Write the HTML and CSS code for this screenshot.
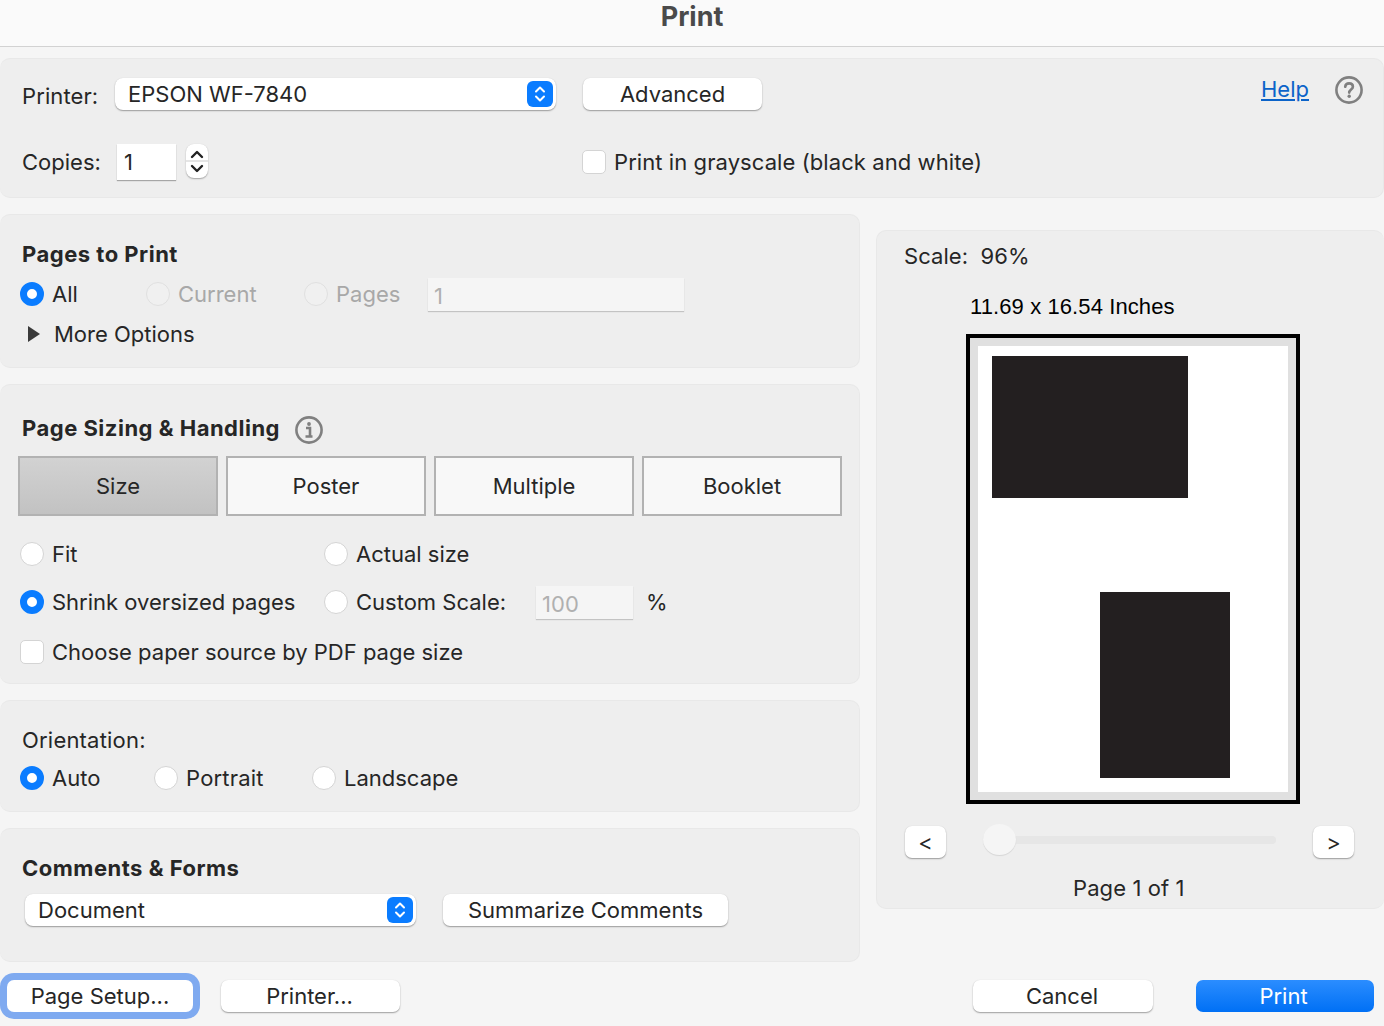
FILE: index.html
```html
<!DOCTYPE html>
<html lang="en">
<head>
<meta charset="utf-8">
<title>Print</title>
<link rel="stylesheet" href="styles.css">
</head>
<body>
<header class="titlebar">Print</header>

<section class="panel top-panel">
  <div class="row printer-row">
    <span class="label printer-label">Printer:</span>
    <div class="select printer-select"><span>EPSON WF-7840</span>
      <svg class="updown" viewBox="0 0 26 26"><rect width="26" height="26" rx="6" fill="#0a7cff"/><path d="M9 10.5 13 6.5 17 10.5M9 15.5 13 19.5 17 15.5" fill="none" stroke="#fff" stroke-width="2" stroke-linecap="round" stroke-linejoin="round"/></svg>
    </div>
    <button class="btn advanced">Advanced</button>
    <a class="help-link">Help</a>
    <svg class="help-icon" viewBox="0 0 28 28"><circle cx="14" cy="14" r="12.6" fill="none" stroke="#808080" stroke-width="2.6"/><path d="M10.2 10.8C10.4 8.6 12 7.4 14.1 7.4 16.3 7.4 17.9 8.7 17.9 10.7 17.9 13.4 14.2 13.6 14.2 16.6" fill="none" stroke="#808080" stroke-width="2.6" stroke-linecap="round"/><circle cx="14.2" cy="20.3" r="1.7" fill="#808080"/></svg>
  </div>
  <div class="row copies-row">
    <span class="label copies-label">Copies:</span>
    <div class="field copies-field">1</div>
    <div class="stepper">
      <svg viewBox="0 0 22 34"><path d="M6 13 11 8 16 13M6 22 11 27 16 22" fill="none" stroke="#222" stroke-width="2.4" stroke-linecap="round" stroke-linejoin="round"/><path d="M0 17H22" stroke="#dcdcdc" stroke-width="1.5"/></svg>
    </div>
    <span class="check grayscale-check"></span>
    <span class="label grayscale-label">Print in grayscale (black and white)</span>
  </div>
</section>

<div class="main">
  <div class="left-col">
    <section class="panel pages-panel">
      <h2 class="row heading">Pages to Print</h2>
      <div class="row option-row">
        <span class="radio on"></span><span class="label w-all">All</span>
        <span class="radio off"></span><span class="label muted w-current">Current</span>
        <span class="radio off"></span><span class="label muted w-pages">Pages</span>
        <div class="field disabled pages-field">1</div>
      </div>
      <div class="row more-row">
        <svg class="disclosure" viewBox="0 0 12 16"><path d="M0 0 12 8 0 16Z" fill="#3a3a3a"/></svg>
        <span class="label">More Options</span>
      </div>
    </section>

    <section class="panel sizing-panel">
      <h2 class="row heading">Page Sizing &amp; Handling
        <svg class="info-icon" viewBox="0 0 28 28"><circle cx="14" cy="14" r="12.6" fill="none" stroke="#808080" stroke-width="2.6"/><circle cx="14" cy="8" r="1.9" fill="#808080"/><path d="M11 12H15V20M10.5 20.5H17.5" fill="none" stroke="#808080" stroke-width="2.6"/></svg>
      </h2>
      <div class="tabs">
        <button class="tab active">Size</button>
        <button class="tab">Poster</button>
        <button class="tab">Multiple</button>
        <button class="tab">Booklet</button>
      </div>
      <div class="row fit-row">
        <div class="col-a"><span class="radio"></span><span class="label">Fit</span></div>
        <span class="radio"></span><span class="label">Actual size</span>
      </div>
      <div class="row shrink-row">
        <div class="col-a"><span class="radio on"></span><span class="label">Shrink oversized pages</span></div>
        <span class="radio"></span><span class="label">Custom Scale:</span>
        <div class="field disabled scale-field">100</div>
        <span class="label percent">%</span>
      </div>
      <div class="row source-row">
        <span class="check source-check"></span><span class="label">Choose paper source by PDF page size</span>
      </div>
    </section>

    <section class="panel orientation-panel">
      <div class="row plain-heading"><span class="label wide-label">Orientation:</span></div>
      <div class="row orient-row">
        <span class="radio on"></span><span class="label w-auto">Auto</span>
        <span class="radio"></span><span class="label wide-label w-portrait">Portrait</span>
        <span class="radio"></span><span class="label">Landscape</span>
      </div>
    </section>

    <section class="panel comments-panel">
      <h2 class="row heading">Comments &amp; Forms</h2>
      <div class="row comments-row">
        <div class="select doc-select"><span>Document</span>
          <svg class="updown" viewBox="0 0 26 26"><rect width="26" height="26" rx="6" fill="#0a7cff"/><path d="M9 10.5 13 6.5 17 10.5M9 15.5 13 19.5 17 15.5" fill="none" stroke="#fff" stroke-width="2" stroke-linecap="round" stroke-linejoin="round"/></svg>
        </div>
        <button class="btn summarize">Summarize Comments</button>
      </div>
    </section>
  </div>

  <section class="panel preview-panel">
    <div class="scale-text">Scale:&nbsp; 96%</div>
    <div class="size-text">11.69 x 16.54 Inches</div>
    <div class="preview">
      <div class="sheet">
        <div class="block block-a"></div>
        <div class="block block-b"></div>
      </div>
    </div>
    <div class="pager">
      <button class="btn nav">&lt;</button>
      <div class="slider"><span class="thumb"></span></div>
      <button class="btn nav">&gt;</button>
    </div>
    <div class="page-count">Page 1 of 1</div>
  </section>
</div>

<footer class="footer">
  <button class="btn foot focus">Page Setup...</button>
  <button class="btn foot printer-btn">Printer...</button>
  <button class="btn foot cancel">Cancel</button>
  <button class="btn foot primary">Print</button>
</footer>
</body>
</html>
```
FILE: styles.css
```css
* { box-sizing: border-box; }
html, body { margin: 0; padding: 0; }
body {
  width: 1384px;
  height: 1026px;
  overflow: hidden;
  background: #f5f5f5;
  color: #262626;
  font-family: Inter, "Liberation Sans", sans-serif;
  font-size: 22px;
  letter-spacing: 0;
}
button { font: inherit; color: inherit; margin: 0; cursor: default; }

.titlebar {
  height: 47px;
  padding-bottom: 13px;
  display: flex;
  align-items: center;
  justify-content: center;
  background: #fafafa;
  border-bottom: 1px solid #d2d2d2;
  font-size: 27px;
  font-weight: 700;
  color: #4a4a4a;
}

.panel {
  background: #eeeeee;
  border: 1px solid #e8e8e8;
  border-radius: 10px;
}
.row { display: flex; align-items: center; margin: 0; }
.label { white-space: nowrap; }
.muted { color: #a8a8a8; }
.wide-label { letter-spacing: .2px; }

.top-panel { height: 140px; margin-top: 11px; padding: 19px 20px 0 22px; border-left: 0; }
.printer-row { height: 32px; }
.printer-label { width: 93px; padding-top: 3px; letter-spacing: .1px; }
.select {
  height: 32px;
  display: flex;
  align-items: center;
  justify-content: space-between;
  background: #fff;
  border-radius: 8px;
  box-shadow: 0 1px 1.5px rgba(0,0,0,.35), 0 0 1px rgba(0,0,0,.1);
}
.printer-select { width: 441px; padding: 0 3px 0 13px; }
.updown { width: 26px; height: 26px; flex: none; }
.btn {
  height: 32px;
  padding: 0;
  border: 0;
  background: #fff;
  border-radius: 7px;
  box-shadow: 0 1px 1.5px rgba(0,0,0,.35), 0 0 1px rgba(0,0,0,.1);
}
.advanced { width: 179px; margin-left: 27px; }
.help-link {
  margin-left: auto;
  margin-top: -11px;
  color: #0b63c9;
  text-decoration: underline;
}
.help-icon { width: 28px; height: 28px; margin: -8px 0 0 26px; }

.copies-row { height: 36px; margin-top: 34px; }
.copies-label { width: 95px; }
.field { background: #fff; display: flex; align-items: center; box-shadow: 0 1px 1px rgba(0,0,0,.3); }
.copies-field { width: 59px; height: 36px; padding-left: 7px; }
.stepper {
  width: 22px;
  height: 34px;
  margin: -2px 0 0 10px;
  background: #fff;
  border-radius: 8px;
  box-shadow: 0 1px 1.5px rgba(0,0,0,.3), 0 0 1px rgba(0,0,0,.1);
  overflow: hidden;
}
.stepper svg { display: block; width: 22px; height: 34px; }
.check {
  flex: none;
  height: 24px;
  background: #fff;
  border: 1px solid #d4d4d4;
  border-radius: 5px;
}
.grayscale-check { width: 24px; margin: 0 8px 0 374px; }
.grayscale-label { letter-spacing: .08px; }

.main { display: flex; margin-top: 16px; }
.left-col { width: 860px; display: flex; flex-direction: column; gap: 16px; }
.left-col .panel { border-left: 0; }

.heading { height: 30px; font-size: 22px; font-weight: 700; letter-spacing: .5px; margin-left: 22px; color: #262626; }
.radio {
  flex: none;
  width: 24px;
  height: 24px;
  margin-right: 8px;
  border-radius: 50%;
  background: #fff;
  border: 1px solid #d4d4d4;
}
.radio.on { background: #fff; border: 7.5px solid #0a7cff; }
.radio.off { background: #f0f0f0; border-color: #e0e0e0; }

.pages-panel { height: 154px; padding-top: 24px; }
.option-row { height: 30px; margin: 10px 0 0 20px; }
.w-all { width: 94px; }
.w-current { width: 126px; }
.w-pages { width: 92px; }
.disabled { background: #f5f5f5; color: #b0b0b0; box-shadow: 0 1px 1px rgba(0,0,0,.18); }
.pages-field { width: 256px; height: 33px; padding: 3px 0 0 6px; }
.more-row { height: 30px; margin: 10px 0 0 28px; }
.disclosure { width: 12px; height: 16px; margin-right: 14px; }

.sizing-panel { height: 300px; padding-top: 28px; }
.info-icon { width: 28px; height: 28px; margin: 3px 0 0 15px; }
.tabs {
  display: grid;
  grid-template-columns: repeat(4, 200px);
  gap: 8px;
  margin: 13px 0 0 18px;
}
.tab {
  height: 60px;
  padding: 0;
  background: #f8f8f8;
  border: 2px solid #b2b2b2;
}
.tab.active { background: linear-gradient(#d2d2d2, #c2c2c2); }
.fit-row { height: 30px; margin: 23px 0 0 20px; }
.shrink-row { height: 30px; margin: 18px 0 0 20px; }
.source-row { height: 30px; margin: 20px 0 0 20px; }
.col-a { width: 304px; display: flex; align-items: center; }
.source-check { width: 24px; margin-right: 8px; }
.scale-field { width: 97px; height: 33px; margin-left: 30px; padding: 3px 0 0 6px; }
.percent { margin-left: 13px; }

.orientation-panel { height: 112px; padding-top: 24px; }
.plain-heading { height: 30px; margin-left: 22px; }
.orient-row { height: 30px; margin: 8px 0 0 20px; }
.w-auto { width: 102px; }
.w-portrait { width: 126px; }

.comments-panel { height: 134px; padding-top: 24px; }
.comments-row { margin: 11px 0 0 25px; }
.doc-select { width: 391px; padding: 0 3px 0 13px; }
.summarize { width: 285px; margin-left: 27px; }

.preview-panel {
  width: 508px;
  height: 679px;
  margin: 16px 0 0 16px;
  border-right: 0;
  display: flex;
  flex-direction: column;
}
.scale-text { height: 30px; margin: 10px 0 0 27px; display: flex; align-items: center; letter-spacing: .05px; }
.size-text {
  height: 30px;
  margin: 21px 0 0 93px;
  display: flex;
  align-items: center;
  color: #000;
  font-family: "Liberation Sans", Arial, sans-serif;
  font-size: 22px;
  letter-spacing: .1px;
}
.preview {
  width: 334px;
  height: 470px;
  margin: 12px 0 0 89px;
  padding: 8px;
  background: #e0e0e0;
  border: 4px solid #000;
}
.sheet { position: relative; width: 310px; height: 446px; background: #fff; }
.block { position: absolute; background: #231f20; }
.block-a { left: 14px; top: 10px; width: 196px; height: 142px; }
.block-b { left: 122px; top: 246px; width: 130px; height: 186px; }

.pager { display: flex; align-items: center; height: 32px; margin: 22px 0 0 28px; }
.nav { width: 41px; flex: none; }
.slider {
  position: relative;
  width: 293px;
  height: 8px;
  margin: -4px 37px 0 37px;
  background: #e6e6e6;
  border-radius: 4px;
}
.thumb {
  position: absolute;
  left: 0;
  top: -12px;
  width: 33px;
  height: 31px;
  border-radius: 50%;
  background: #f5f5f5;
  box-shadow: 0 1px 1px rgba(0,0,0,.1);
}
.page-count { width: 506px; margin-top: 15px; height: 30px; padding-left: 196px; display: flex; align-items: center; letter-spacing: .1px; }

.footer { display: flex; margin-top: 18px; padding-left: 7px; }
.foot { flex: none; }
.focus { width: 186px; box-shadow: 0 0 0 7px #7faaf0; }
.printer-btn { width: 179px; margin-left: 28px; padding-right: 2px; }
.cancel { width: 180px; margin-left: 573px; padding-right: 2px; }
.primary {
  width: 178px;
  margin-left: 43px;
  padding-right: 3px;
  color: #fff;
  background: linear-gradient(#2b8dff, #0070f5);
  box-shadow: none;
}
```
